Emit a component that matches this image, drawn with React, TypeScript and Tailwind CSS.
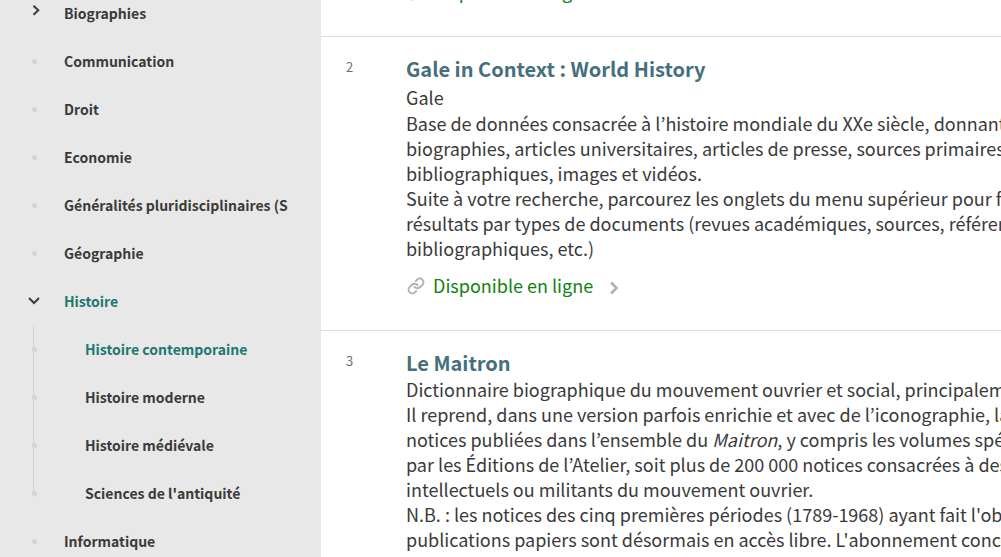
import type { ReactNode } from "react";
import { Link as LinkIcon } from "lucide-react";

type Category = { label: string; state?: "open" | "closed"; active?: boolean; children?: Category[] };

const categories: Category[] = [
  { label: "Biographies", state: "closed" },
  { label: "Communication" },
  { label: "Droit" },
  { label: "Economie" },
  { label: "Généralités pluridisciplinaires (S" },
  { label: "Géographie" },
  {
    label: "Histoire",
    state: "open",
    active: true,
    children: [
      { label: "Histoire contemporaine", active: true },
      { label: "Histoire moderne" },
      { label: "Histoire médiévale" },
      { label: "Sciences de l'antiquité" },
    ],
  },
  { label: "Informatique" },
];

function Chevron({ open }: { open: boolean }) {
  return (
    <svg viewBox="0 0 12 12" className="size-3" fill="none" stroke="#3a3a3a" strokeWidth="2">
      {open ? <path d="M1 5 6 10 11 5" /> : <path d="M5.5 .8 10.3 5.3 5.5 9.8" />}
    </svg>
  );
}

function Row({ item, nested = false }: { item: Category; nested?: boolean }) {
  return (
    <div className="flex h-12 items-center">
      <div className="flex w-16 shrink-0 items-center pl-7">
        {item.state ? (
          <button aria-label={item.label} aria-expanded={item.state === "open"} className="flex pb-1">
            <Chevron open={item.state === "open"} />
          </button>
        ) : (
          <span className="ml-1 size-[5px] rounded-full bg-[#d4d4d4]" />
        )}
      </div>
      <a
        href="#"
        className={`whitespace-nowrap text-[14px] leading-6 font-bold ${nested ? "pl-[21px]" : ""} ${
          item.active ? "text-[#1d7773]" : "text-[#3a3a3a]"
        }`}
      >
        {item.label}
      </a>
    </div>
  );
}

function Availability() {
  return (
    <a href="#" className="mt-3 flex h-6 items-center text-[18px] leading-6 text-[#118011]">
      <LinkIcon className="mt-0.5 mr-2 ml-px size-[18px] text-[#b0b0b0]" strokeWidth={2.6} />
      Disponible en ligne
      <svg viewBox="0 0 10 14" className="mt-1.5 ml-4 h-3.5 w-2.5" fill="none" stroke="#a9b9c6" strokeWidth="2.8">
        <path d="M2 1.5 7.5 7 2 12.5" />
      </svg>
    </a>
  );
}

function Result({ index, title, publisher, children }: { index: number; title: string; publisher?: string; children: ReactNode }) {
  return (
    <article className="flex border-b border-[#dcdcdc] pt-[17px] pb-[33px] pl-[25px]">
      <div className="w-[60px] shrink-0 pt-px text-[13px] leading-6 text-[#707070]">{index}</div>
      <div className="text-[18px] leading-[25px] whitespace-nowrap text-[#3a3a3a]">
        <h3 className="text-[20px] leading-[29px] font-bold text-[#446f7c]">
          <a href="#">{title}</a>
        </h3>
        {publisher && <p className="mt-0.5 mb-px">{publisher}</p>}
        <div>{children}</div>
        <Availability />
      </div>
    </article>
  );
}

export default function App() {
  return (
    <div className="flex h-screen overflow-hidden bg-white font-['Noto_Sans_CJK_KR',sans-serif]">
      <nav aria-label="Catégories" className="w-[321px] shrink-0 overflow-hidden bg-[#e8e8e8]">
        <div className="-mt-[11px]">
          {categories.map((item) => (
            <div key={item.label}>
              <Row item={item} />
              {item.children && (
                <div className="relative">
                  <span className="absolute top-0 bottom-5 left-[33px] w-px bg-[#d4d4d4]" />
                  {item.children.map((child) => (
                    <Row key={child.label} item={child} nested />
                  ))}
                </div>
              )}
            </div>
          ))}
        </div>
      </nav>
      <main className="min-w-0 flex-1 overflow-hidden">
        <div className="-mt-[33px]">
          <div className="border-b border-[#dcdcdc] pb-[33px] pl-[85px]">
            <Availability />
          </div>
          <Result index={2} title="Gale in Context : World History" publisher="Gale">
            <p>Base de données consacrée à l’histoire mondiale du XXe siècle, donnant</p>
            <p>biographies, articles universitaires, articles de presse, sources primaires,</p>
            <p>bibliographiques, images et vidéos.</p>
            <p>Suite à votre recherche, parcourez les onglets du menu supérieur pour fil</p>
            <p>résultats par types de documents (revues académiques, sources, référen</p>
            <p>bibliographiques, etc.)</p>
          </Result>
          <Result index={3} title="Le Maitron">
            <p>Dictionnaire biographique du mouvement ouvrier et social, principaleme</p>
            <p>Il reprend, dans une version parfois enrichie et avec de l’iconographie, la</p>
            <p>
              notices publiées dans l’ensemble du <em>Maitron</em>, y compris les volumes spéc
            </p>
            <p>par les Éditions de l’Atelier, soit plus de 200 000 notices consacrées à des</p>
            <p>intellectuels ou militants du mouvement ouvrier.</p>
            <p>N.B. : les notices des cinq premières périodes (1789-1968) ayant fait l'obje</p>
            <p>publications papiers sont désormais en accès libre. L'abonnement conce</p>
          </Result>
        </div>
      </main>
    </div>
  );
}
